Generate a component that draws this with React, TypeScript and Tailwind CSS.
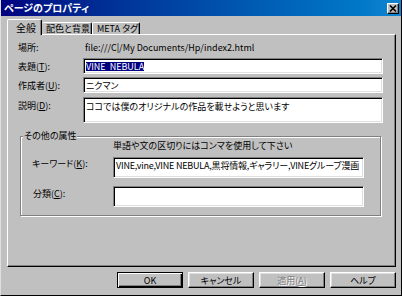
import React from 'react';

const sunken =
  'bg-white border border-t-[#808080] border-l-[#808080] border-r-white border-b-white shadow-[inset_1px_1px_0_#000,inset_-1px_-1px_0_#dfdfdf]';
const raised =
  'bg-[#c0c0c0] border border-t-white border-l-white border-r-black border-b-black shadow-[inset_-1px_-1px_0_#808080,inset_1px_1px_0_#dfdfdf]';

const TextBox = ({ className, children }: { className: string; children?: React.ReactNode }) => (
  <div className={`${sunken} ${className} px-[2px] overflow-hidden whitespace-nowrap`}>{children}</div>
);

const Button = ({ children, isDefault, disabled }: { children: React.ReactNode; isDefault?: boolean; disabled?: boolean }) => (
  <div
    className={`w-[66px] h-[16px] flex items-center justify-center ${
      isDefault
        ? 'border border-black bg-[#c0c0c0] shadow-[inset_1px_1px_0_#fff,inset_-1px_-1px_0_#000,inset_-2px_-2px_0_#808080]'
        : raised
    } ${disabled ? 'text-[#808080] [text-shadow:1px_1px_0_#fff]' : 'text-black'}`}
  >
    {children}
  </div>
);

export default function App() {
  return (
    <div className="w-[402px] h-[296px] bg-[#c0c0c0] flex flex-col border-l border-l-[#dfdfdf] border-r border-r-black border-b border-b-black font-['Noto_Sans_CJK_JP',sans-serif] [font-feature-settings:'palt'] text-[9px] text-black leading-none whitespace-nowrap overflow-hidden">
      {/* title bar */}
      <div className="h-[16px] shrink-0 flex items-center bg-gradient-to-r from-[#000080] to-[#1084d0]">
        <span className="pl-[3px] text-white font-bold text-[10px]">ページのプロパティ</span>
        <div className="ml-auto mr-[2px] w-[12px] h-[11px] flex items-center justify-center bg-[#c0c0c0] border border-t-white border-l-white border-r-black border-b-black shadow-[inset_-1px_-1px_0_#808080]">
          <svg width="8" height="7" viewBox="0 0 8 7">
            <path d="M1 0.5 L7 6.5 M7 0.5 L1 6.5" stroke="#000" strokeWidth="1.6" />
          </svg>
        </div>
      </div>

      {/* tabs */}
      <div className="mt-[3px] ml-[6px] h-[16px] shrink-0 -mb-[1px] flex items-end relative z-10">
        <div className="h-[16px] w-[35px] bg-[#c0c0c0] border-l border-t border-r border-l-white border-t-white border-r-black rounded-t-[2px] shadow-[inset_-1px_0_0_#808080] flex items-start pt-[3px] pl-[8px] text-[10px]">
          全般
        </div>
        <div className="h-[12px] mb-[1px] w-[50px] border-t border-r border-t-white border-r-black rounded-t-[2px] shadow-[inset_-1px_0_0_#808080] flex items-center pl-[4px]">
          配色と背景
        </div>
        <div className="h-[12px] mb-[1px] w-[48px] border-l border-t border-r border-l-white border-t-white border-r-black rounded-t-[2px] shadow-[inset_-1px_0_0_#808080] flex items-center pl-[4px]">
          META タグ
        </div>
      </div>

      {/* panel */}
      <div className="ml-[6px] w-[389px] h-[233px] shrink-0 min-h-0 overflow-hidden border border-t-white border-l-white border-r-black border-b-black shadow-[inset_-1px_-1px_0_#808080] pl-[10px] flex flex-col">
        <div className="mt-[5px] h-[14px] shrink-0 flex items-center">
          <span className="w-[67px]">場所:</span>
          <span>file:///C|/My Documents/Hp/index2.html</span>
        </div>
        <div className="mt-[4px] shrink-0 flex items-center">
          <span className="w-[65px]">
            表題(<u>T</u>):
          </span>
          <TextBox className="w-[300px] h-[16px] flex items-center">
            <span className="bg-[#000080] text-white">VINE&nbsp;&nbsp;NEBULA</span>
          </TextBox>
        </div>
        <div className="mt-[3px] shrink-0 flex items-center">
          <span className="w-[65px]">
            作成者(<u>U</u>):
          </span>
          <TextBox className="w-[300px] h-[16px] flex items-center">ニクマン</TextBox>
        </div>
        <div className="mt-[4px] shrink-0 flex items-start">
          <span className="w-[65px] pt-[4px]">
            説明(<u>D</u>):
          </span>
          <TextBox className="w-[300px] h-[26px] pt-[4px]">ココでは僕のオリジナルの作品を載せようと思います</TextBox>
        </div>

        <fieldset className="mt-[7px] ml-[2px] w-[361px] h-[86px] shrink-0 border border-[#808080] shadow-[inset_1px_1px_0_#fff,1px_1px_0_#fff]">
          <legend className="ml-[2px] px-[1px] h-[12px] leading-[12px] bg-[#c0c0c0]">その他の属性</legend>
          <div className="h-[8px] leading-[8px] pl-[92px]">単語や文の区切りにはコンマを使用して下さい</div>
          <div className="mt-[7px] flex items-start pl-[11px]">
            <span className="w-[81px] pt-[2px]">
              キーワード(<u>K</u>):
            </span>
            <TextBox className="w-[251px] h-[21px] pt-[3px] tracking-[-0.2px]">
              VINE,vine,VINE NEBULA,黒将情報,ギャラリー,VINEグループ漫画
            </TextBox>
          </div>
          <div className="mt-[8px] flex items-start pl-[12px]">
            <span className="w-[80px] pt-[3px]">
              分類(<u>C</u>):
            </span>
            <TextBox className="w-[251px] h-[21px]" />
          </div>
        </fieldset>
      </div>

      {/* buttons */}
      <div className="mt-[5px] shrink-0 flex justify-end gap-[5px] pr-[5px]">
        <Button isDefault>OK</Button>
        <Button>キャンセル</Button>
        <Button disabled>
          適用(<u>A</u>)
        </Button>
        <Button>ヘルプ</Button>
      </div>
    </div>
  );
}
